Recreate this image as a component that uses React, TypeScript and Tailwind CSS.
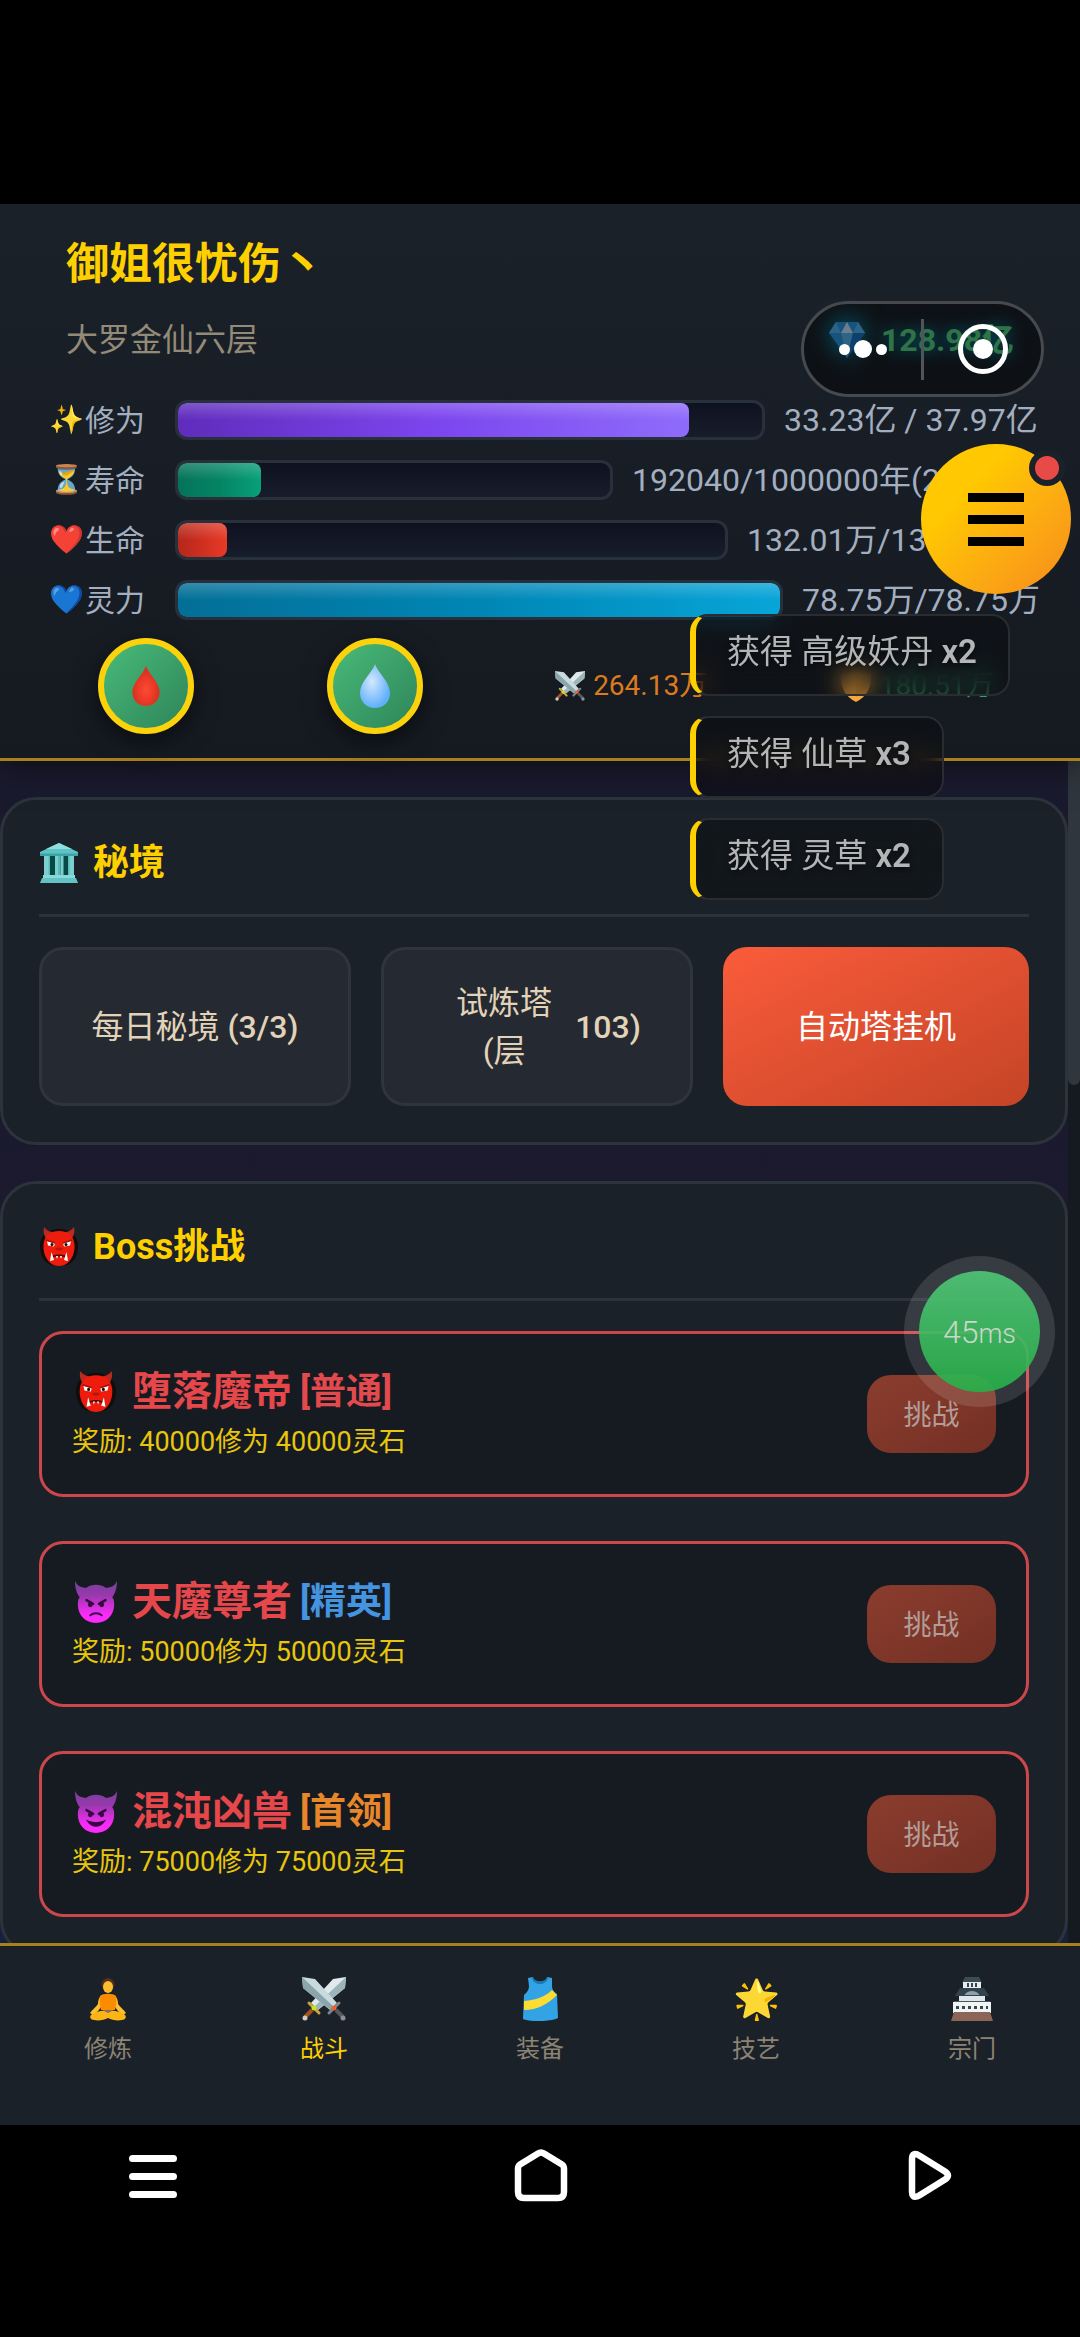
import React from "react";

type IconProps = { className?: string };

function MuseumIcon({ className }: IconProps) {
  return (
    <svg viewBox="0 0 40 40" className={className} aria-hidden="true">
      <path d="M20 0L39 9v4H1V9z" fill="#5cc4c4" />
      <path d="M20 0l13 6H7z" fill="#8fdede" />
      <path d="M1 10.500h38V13H1z" fill="#3fa3a6" />
      <path d="M5 13h30v20H5z" fill="#064a45" />
      <path d="M5 13h6v20H5zM16 13h3v20h-3zM21.500 13h3v20h-3zM29 13h6v20h-6z" fill="#7bd0cf" />
      <path d="M19 13h2.500v20H19zM9.500 13H11v20H9.500zM29 13h1.500v20H29z" fill="#5bb9b9" />
      <path d="M4 32h32v3H4z" fill="#8ad9d8" />
      <path d="M3 35h34l2 5H1z" fill="#62c3c4" />
    </svg>
  );
}

function OgreIcon({ className }: IconProps) {
  return (
    <svg viewBox="0 0 40 40" className={className} aria-hidden="true">
      <path
        d="M20 2c11 0 19 6 19 17 0 9-4 16-9 18-3 2-17 2-20 0C5 35 1 28 1 19 1 8 9 2 20 2z"
        fill="#110d0d"
      />
      <path d="M5 0c2 3 6 5 9 5l-5 8C5 10 4 5 5 0zM35 0c-2 3-6 5-9 5l5 8c4-3 5-8 4-13z" fill="#b92a20" />
      <path
        d="M20 4c9 0 15 5 15.500 14 .5 8-3 15-7 18-4 4-13 4-17 0-4-3-7.500-10-7-18C5 9 11 4 20 4z"
        fill="#ee1c0c"
      />
      <path d="M8 14l8 2.500-1 3-6-1zM32 14l-8 2.500 1 3 6-1z" fill="#fff" />
      <circle cx="13" cy="17.500" r="1.500" fill="#111" />
      <circle cx="27" cy="17.500" r="1.500" fill="#111" />
      <path d="M7 13l9 3M33 13l-9 3" stroke="#a5130b" strokeWidth="1.500" />
      <path d="M16 22c2-2 6-2 8 0-2 2-6 2-8 0z" fill="#b8160c" />
      <path d="M12 29c4-2 12-2 16 0v2c-4-2-12-2-16 0z" fill="#590805" />
      <path d="M11 34l1.500-9 2.500 8zM29 34l-1.500-9-2.500 8zM17 29l1 3 1-3zM21 29l1 3 1-3z" fill="#fff" />
    </svg>
  );
}

function DevilIcon({ className, smiling }: IconProps & { smiling?: boolean }) {
  return (
    <svg viewBox="0 0 44 44" className={className} aria-hidden="true">
      <defs>
        <linearGradient id="devil" x1="0" y1="0" x2="0" y2="1">
          <stop offset="0" stopColor="#74419a" />
          <stop offset=".35" stopColor="#9a38ad" />
          <stop offset=".8" stopColor="#fb2bfb" />
        </linearGradient>
      </defs>
      <path
        d="M0 0c3 6 7 7 12 7 3-2 6-3 10-3s7 1 10 3c5 0 9-1 12-7 0 8-2 13-5 17 2 2 2 5 2 8 0 11-8 19-19 19S3 36 3 25c0-3 0-6 2-8C2 13 0 8 0 0z"
        fill="url(#devil)"
      />
      <path d="M12 20l7 4M32 20l-7 4" stroke="#35083f" strokeWidth="2.500" strokeLinecap="round" />
      <circle cx="16" cy="25" r="2.500" fill="#35083f" />
      <circle cx="28" cy="25" r="2.500" fill="#35083f" />
      <path
        d={smiling ? "M14 32c4 6 12 6 16 0-5 2-11 2-16 0z" : "M16 36c3-3 9-3 12 0"}
        fill={smiling ? "#35083f" : "none"}
        stroke="#35083f"
        strokeWidth="2"
        strokeLinecap="round"
      />
    </svg>
  );
}

function SwordsIcon({ className }: IconProps) {
  return (
    <svg viewBox="0 0 44 44" className={className} aria-hidden="true">
      <path d="M44 0L31 2 9 26l7 7 27-22z" fill="#dfeaec" />
      <path d="M44 0L12 30l4 3 27-22z" fill="#9db4bb" />
      <path d="M10 33l-7 7" stroke="#a3511f" strokeWidth="4" />
      <circle cx="3" cy="41" r="2.500" fill="#d6c9bf" />
      <path d="M7 26l10 10" stroke="#c9a53c" strokeWidth="3" strokeLinecap="round" />
      <path d="M0 0l13 2 22 24-7 7L1 11z" fill="#c9dadf" />
      <path d="M0 0l32 30-4 3L1 11z" fill="#8ba5ad" />
      <path d="M34 33l7 7" stroke="#55585c" strokeWidth="4" />
      <circle cx="41" cy="41" r="2.500" fill="#8b8f94" />
      <path d="M37 26L27 36" stroke="#7b868c" strokeWidth="3" strokeLinecap="round" />
      <circle cx="12" cy="31" r="2.500" fill="#c6e12d" />
      <circle cx="32" cy="31" r="2.500" fill="#f0602a" />
    </svg>
  );
}

function GemIcon({ className }: IconProps) {
  return (
    <svg viewBox="0 0 36 36" className={className} aria-hidden="true">
      <path d="M7 0h22l7 11-18 25L0 11z" fill="#2a97e8" />
      <path d="M7 0l5 11H0zM29 0l-5 11h12z" fill="#52b4f2" />
      <path d="M18 0l6 11H12z" fill="#c5e6fb" />
      <path d="M12 11h12l-6 25z" fill="#58b7f0" />
      <path d="M24 11h12L18 36z" fill="#1976c9" />
    </svg>
  );
}

function MeditateIcon({ className }: IconProps) {
  return (
    <svg viewBox="0 0 44 44" className={className} aria-hidden="true">
      <circle cx="22" cy="7.500" r="6.500" fill="#54301f" />
      <ellipse cx="22" cy="10" rx="5" ry="6" fill="#fdbf2d" />
      <path d="M16 18c-3 2-4 5-4 9-2 3-6 6-8 9l3 2c4-2 7-6 9-10zM28 18c3 2 4 5 4 9 2 3 6 6 8 9l-3 2c-4-2-7-6-9-10z" fill="#fdbf2d" />
      <path d="M14 19c3-3 13-3 16 0 1 5 0 9-1 14H15c-1-5-2-9-1-14z" fill="#fb8c00" />
      <path d="M5 38c4-3 10-5 17-4 7-1 13 1 17 4 2 2 0 5-3 5-5 1-10 0-14-2-4 2-9 3-14 2-3 0-5-3-3-5z" fill="#fdb515" />
      <path d="M16 33h12l-6 3z" fill="#8a6d62" />
    </svg>
  );
}

function JerseyIcon({ className }: IconProps) {
  return (
    <svg viewBox="0 0 44 44" className={className} aria-hidden="true">
      <path
        d="M10 1l5-1c1 6 13 6 14 0l5 1v8c0 4 2 6 5 8l1 24c-8 4-28 4-35 1l1-24c3-3 5-5 5-9z"
        fill="#32a4e6"
      />
      <path d="M14 1c2 8 14 8 16 0l-1-1c-1 6-13 6-14 0z" fill="#1b77b5" />
      <path d="M34 13l5 5c-9 9-20 15-33 15v-9c12-1 21-4 28-11z" fill="#fbdc33" />
    </svg>
  );
}

function CastleIcon({ className }: IconProps) {
  return (
    <svg viewBox="0 0 44 44" className={className} aria-hidden="true">
      <path d="M15 0h14l3 6H12z" fill="#3c4c56" />
      <path d="M13 5h18v6H13z" fill="#e6edf0" />
      <path d="M17 6h2v4h-2zM21 6h2v4h-2zM25 6h2v4h-2z" fill="#37474f" />
      <path d="M10 11h24l5 8H5z" fill="#33434d" />
      <path d="M15 17c4-4 10-4 14 0v1H15z" fill="#8fa0a8" />
      <path d="M9 19h26v5H9z" fill="#dfe7ea" />
      <path d="M4 24h36v3H4z" fill="#46565f" />
      <path d="M3 25h38v11H3z" fill="#f1f4f5" />
      <path d="M6 29h3v3H6zM12 29h3v3h-3zM18 29h3v3h-3zM24 29h3v3h-3zM30 29h3v3h-3zM36 29h2v3h-2z" fill="#37474f" />
      <path d="M4 35h36l3 9H1z" fill="#8a6558" />
    </svg>
  );
}

function DropIcon({ className, kind }: IconProps & { kind: "blood" | "water" }) {
  return (
    <svg viewBox="0 0 32 44" className={className} aria-hidden="true">
      <defs>
        <radialGradient id="blood" cx=".5" cy=".6" r=".5">
          <stop offset="0" stopColor="#ff4a33" />
          <stop offset="1" stopColor="#d93020" />
        </radialGradient>
        <radialGradient id="water" cx=".4" cy=".4" r=".6">
          <stop offset="0" stopColor="#d3e8fd" />
          <stop offset="1" stopColor="#62b0fb" />
        </radialGradient>
      </defs>
      <path
        d="M16 0c3 9 15 18 15 29 0 9-7 15-15 15S1 38 1 29C1 18 13 9 16 0z"
        fill={kind === "blood" ? "url(#blood)" : "url(#water)"}
      />
    </svg>
  );
}

function ShieldIcon({ className }: IconProps) {
  return (
    <svg viewBox="0 0 32 32" className={className} aria-hidden="true">
      <path d="M16 0c5 3 10 4 15 4 1 14-5 23-15 28C6 27 0 18 1 4c5 0 10-1 15-4z" fill="#f5a83e" />
      <path d="M16 5c3 2 7 3 10 3 0 9-3 15-10 19z" fill="#e0912f" />
    </svg>
  );
}

const bars = [
  {
    icon: "✨",
    label: "修为",
    value: "33.23亿 / 37.97亿",
    percent: 87.5,
    fill: "from-[#5f2cbc] via-[#7c45ee] to-[#8f6bfb]",
    valueWidth: "w-[260px]",
  },
  {
    icon: "⏳",
    label: "寿命",
    value: "192040/1000000年(20%)",
    percent: 19.2,
    fill: "from-[#047359] via-[#058464] to-[#08a079]",
    valueWidth: "w-[412px]",
  },
  {
    icon: "❤️",
    label: "生命",
    value: "132.01万/1390.2万",
    percent: 9,
    fill: "from-[#b5271b] via-[#cf2f20] to-[#e83a28]",
    valueWidth: "w-[297px]",
  },
  {
    icon: "💙",
    label: "灵力",
    value: "78.75万/78.75万",
    percent: 100,
    fill: "from-[#036f97] via-[#0086b5] to-[#08a5d8]",
    valueWidth: "w-[242px]",
  },
];

function StatBar({ icon, label, value, percent, fill, valueWidth }: (typeof bars)[number]) {
  return (
    <div className="flex h-10 items-center text-[#a3afc0]">
      <div className="flex w-[127px] shrink-0 items-center whitespace-nowrap text-[30px]">
        <span className="w-[37px] text-center text-[28px]">{icon}</span>
        {label}
      </div>
      <div className="h-10 flex-1 overflow-hidden rounded-xl border-3 border-[#28303b] bg-linear-to-b from-[#0e1120] to-[#181d2b]">
        <div
          className={`h-full rounded-lg bg-linear-to-r ${fill}`}
          style={{ width: `${percent}%` }}
        >
          <div className="h-1/2 rounded-t-lg bg-linear-to-b from-white/20 to-transparent" />
        </div>
      </div>
      <div className={`ml-[19px] shrink-0 whitespace-nowrap text-[32px] ${valueWidth}`}>{value}</div>
    </div>
  );
}

function Header() {
  return (
    <header className="relative z-10 border-b-3 border-[#a8801c] bg-linear-to-b from-[#1b2129] to-[#151a21] pt-7 pb-6 shadow-[0_6px_30px_rgba(0,0,0,0.5)]">
      <h1 className="px-[66px] text-[43px] leading-16 font-bold text-[#ffd000]">御姐很忧伤丶</h1>
      <div className="mt-5 flex h-12 items-center justify-between px-[66px]">
        <p className="text-[32px] text-[#938a78]">大罗金仙六层</p>
        <p className="flex items-center gap-4 text-[32px] font-bold text-[#56d480] [text-shadow:0_0_16px_#00b4d8]">
          <GemIcon className="size-9 drop-shadow-[0_0_12px_#00b4d8]" />
          128.98亿
        </p>
      </div>
      <div className="mt-9 flex flex-col gap-5 pr-9 pl-12">
        {bars.map((bar) => (
          <StatBar key={bar.label} {...bar} />
        ))}
      </div>
      <div className="mt-[18px] flex items-center justify-around pr-5 pl-8 text-[28px]">
        <button
          type="button"
          aria-label="回血"
          className="flex size-24 items-center justify-center rounded-full border-6 border-[#fbd20c] bg-linear-to-br from-[#48bb78] to-[#2f855a] shadow-[0_8px_24px_rgba(0,0,0,0.5)]"
        >
          <DropIcon kind="blood" className="h-10 w-8" />
        </button>
        <button
          type="button"
          aria-label="回灵"
          className="flex size-24 items-center justify-center rounded-full border-6 border-[#fbd20c] bg-linear-to-br from-[#48bb78] to-[#2f855a] shadow-[0_8px_24px_rgba(0,0,0,0.5)]"
        >
          <DropIcon kind="water" className="h-[46px] w-8" />
        </button>
        <p className="flex items-center gap-2 text-[#dd7a20]">
          <SwordsIcon className="size-[30px]" />
          264.13万
        </p>
        <p className="flex items-center gap-2 text-[#38a169]">
          <ShieldIcon className="size-8" />
          180.51万
        </p>
      </div>
    </header>
  );
}

function Panel({
  icon,
  title,
  children,
}: {
  icon: React.ReactNode;
  title: string;
  children: React.ReactNode;
}) {
  return (
    <section className="rounded-[36px] border-3 border-[#2c333b] bg-[#1b2128] px-9 pb-9">
      <h2 className="flex h-[117px] items-center gap-3.5 border-b-3 border-[#2c333b] pt-3 text-[36px] font-bold text-[#ffd000]">
        {icon}
        {title}
      </h2>
      {children}
    </section>
  );
}

const bosses = [
  {
    icon: <OgreIcon className="ml-[3px] size-[42px]" />,
    name: "堕落魔帝",
    rank: "[普通]",
    rankColor: "text-[#e24a4d]",
    reward: "奖励: 40000修为 40000灵石",
  },
  {
    icon: <DevilIcon className="ml-[3px] size-[42px]" />,
    name: "天魔尊者",
    rank: "[精英]",
    rankColor: "text-[#4594e0]",
    reward: "奖励: 50000修为 50000灵石",
  },
  {
    icon: <DevilIcon smiling className="ml-[3px] size-[42px]" />,
    name: "混沌凶兽",
    rank: "[首领]",
    rankColor: "text-[#e8862a]",
    reward: "奖励: 75000修为 75000灵石",
  },
];

function BossCard({ icon, name, rank, rankColor, reward }: (typeof bosses)[number]) {
  return (
    <div className="flex h-[166px] items-center justify-between rounded-3xl border-3 border-[#cc474b] bg-[#161b22] px-[30px]">
      <div>
        <h3 className="flex h-14 items-center pt-1 text-[40px] font-bold text-[#e5474a]">
          {icon}
          <span className="ml-[15px]">{name}</span>
          <span className={`ml-2 text-[36px] ${rankColor}`}>{rank}</span>
        </h3>
        <p className="h-12 text-[27px] leading-12 text-[#e8c60c]">{reward}</p>
      </div>
      <button
        type="button"
        disabled
        className="h-[78px] w-[129px] rounded-3xl bg-linear-to-br from-[#8b3d2e] to-[#733024] pt-1 text-[28px] text-[#b29c98]"
      >
        挑战
      </button>
    </div>
  );
}

const tabs = [
  { label: "修炼", icon: <MeditateIcon className="size-11" /> },
  { label: "战斗", icon: <SwordsIcon className="size-11" />, active: true },
  { label: "装备", icon: <JerseyIcon className="size-11" /> },
  { label: "技艺", icon: <span className="text-[38px] leading-11">🌟</span> },
  { label: "宗门", icon: <CastleIcon className="size-11" /> },
];

function TabBar() {
  return (
    <nav className="grid h-[182px] grid-cols-5 border-t-3 border-[#a8801c] bg-[#1b2129] pt-[31px]">
      {tabs.map((tab) => (
        <a
          key={tab.label}
          href="#"
          className={`flex flex-col items-center gap-3 text-2xl ${tab.active ? "text-[#ffd000]" : "text-[#8b8474]"}`}
        >
          <span className="flex h-11 items-center">{tab.icon}</span>
          {tab.label}
        </a>
      ))}
    </nav>
  );
}

function SystemBar() {
  return (
    <div className="flex h-[212px] items-start justify-between bg-black pt-6 pr-[122px] pl-[123px]">
      <button type="button" aria-label="最近任务">
        <svg viewBox="0 0 60 60" className="size-[60px]" stroke="#fff" strokeWidth="7" strokeLinecap="round">
          <path d="M9.500 9.500h41M9.500 27.500h41M9.500 45.500h41" />
        </svg>
      </button>
      <button type="button" aria-label="主页">
        <svg viewBox="0 0 60 60" className="size-[60px]" fill="none" stroke="#fff" strokeWidth="6.500" strokeLinejoin="round">
          <path d="M27 4.500q3-2 6 0l18 11q2 1.500 2 4V43q0 6-6 6H13q-6 0-6-6V19.500q0-2.500 2-4z" />
        </svg>
      </button>
      <button type="button" aria-label="返回">
        <svg viewBox="0 0 60 60" className="size-[60px]" fill="none" stroke="#fff" strokeWidth="6.500" strokeLinejoin="round">
          <path d="M14 10v33q0 6 5 4.500 1.500-.5 3-1.500l25-15.500q6-4 0-8L22 7q-8-5-8 3z" />
        </svg>
      </button>
    </div>
  );
}

const toasts = [
  { item: "高级妖丹", count: 2 },
  { item: "仙草", count: 3 },
  { item: "灵草", count: 2 },
];

export default function App() {
  return (
    <div className="relative flex h-screen flex-col overflow-hidden bg-black pt-[204px] font-['Roboto','Noto_Sans_CJK_SC',sans-serif]">
      <Header />

      <div className="flex min-h-0 flex-1 overflow-hidden bg-[#141a20]">
        <main className="flex-1 space-y-9 overflow-hidden bg-linear-to-b from-[#1a1a2e] via-[#1b1a2e] to-[#16213e] pt-9">
          <Panel icon={<MuseumIcon className="size-10" />} title="秘境">
            <div className="mt-[30px] grid h-[159px] grid-cols-[312fr_312fr_306fr] gap-[30px] text-[32px] text-[#e2d3b8]">
              <button type="button" className="rounded-3xl border-3 border-[#2e353c] bg-[#252a32]">
                每日秘境 <span className="font-medium">(3/3)</span>
              </button>
              <button
                type="button"
                className="flex items-center justify-center rounded-3xl border-3 border-[#2e353c] bg-[#252a32]"
              >
                <span className="w-[142px] px-5 leading-12">试炼塔(层</span>
                <span className="font-medium">103)</span>
              </button>
              <button
                type="button"
                className="rounded-3xl bg-linear-to-br from-[#fa5c3b] to-[#c54426] text-white"
              >
                自动塔挂机
              </button>
            </div>
          </Panel>

          <Panel icon={<OgreIcon className="size-10" />} title="Boss挑战">
            <div className="mt-[30px] flex flex-col gap-11">
              {bosses.map((boss) => (
                <BossCard key={boss.name} {...boss} />
              ))}
            </div>
          </Panel>
        </main>
        {/* scrollbar */}
        <div className="w-3">
          <div className="h-[324px] rounded-b-full bg-[#2f363d]" />
        </div>
      </div>

      <TabBar />
      <SystemBar />

      <div className="absolute top-[614px] left-[690px] z-20 flex flex-col items-start gap-5">
        {toasts.map(({ item, count }) => (
          <div
            key={item}
            className="h-[82px] rounded-[18px] border-2 border-l-6 border-[#292c30] border-l-[#ffd000] bg-black/30 px-[31px] text-[33px] leading-[72px] text-[#b4b5b6] backdrop-blur-[12px] [text-shadow:0_3px_6px_rgba(0,0,0,0.6)]"
          >
            获得 {item} <span className="font-semibold">x{count}</span>
          </div>
        ))}
      </div>

      <div className="absolute top-[301px] right-9 z-20 flex h-24 w-[243px] items-center rounded-full border-3 border-[#46494d] bg-black/45">
        <button type="button" aria-label="更多" className="flex flex-1 items-center justify-center gap-1">
          <span className="size-[11px] rounded-full bg-white" />
          <span className="size-[18px] rounded-full bg-white" />
          <span className="size-[11px] rounded-full bg-white" />
        </button>
        <span className="h-[61px] w-[3px] bg-[#515558]" />
        <button type="button" aria-label="关闭" className="flex flex-1 items-center justify-center">
          <span className="flex size-[50px] items-center justify-center rounded-full border-5 border-white">
            <span className="size-5 rounded-full bg-white" />
          </span>
        </button>
      </div>

      <button
        type="button"
        aria-label="菜单"
        className="absolute top-[444px] right-[9px] z-30 flex size-[150px] flex-col items-center justify-center gap-[13px] rounded-full bg-linear-to-br from-[#ffc800] from-30% to-[#f68a1a]"
      >
        <span className="h-[9px] w-14 bg-black" />
        <span className="h-[9px] w-14 bg-black" />
        <span className="h-[9px] w-14 bg-black" />
        <span className="absolute top-[6px] right-[6px] size-9 rounded-full border-6 border-[#1b2129] bg-[#e84a48]" />
      </button>

      <div className="absolute top-[1256px] right-[25px] z-30 flex size-[151px] items-center justify-center rounded-full bg-white/12">
        <div className="flex size-[121px] items-center justify-center rounded-full bg-linear-to-b from-[#50c878]/90 to-[#24b148]/90 text-[#c9d8c9]">
          <p className="text-[32px] font-light">
            45<span className="text-[27px]">ms</span>
          </p>
        </div>
      </div>
    </div>
  );
}
